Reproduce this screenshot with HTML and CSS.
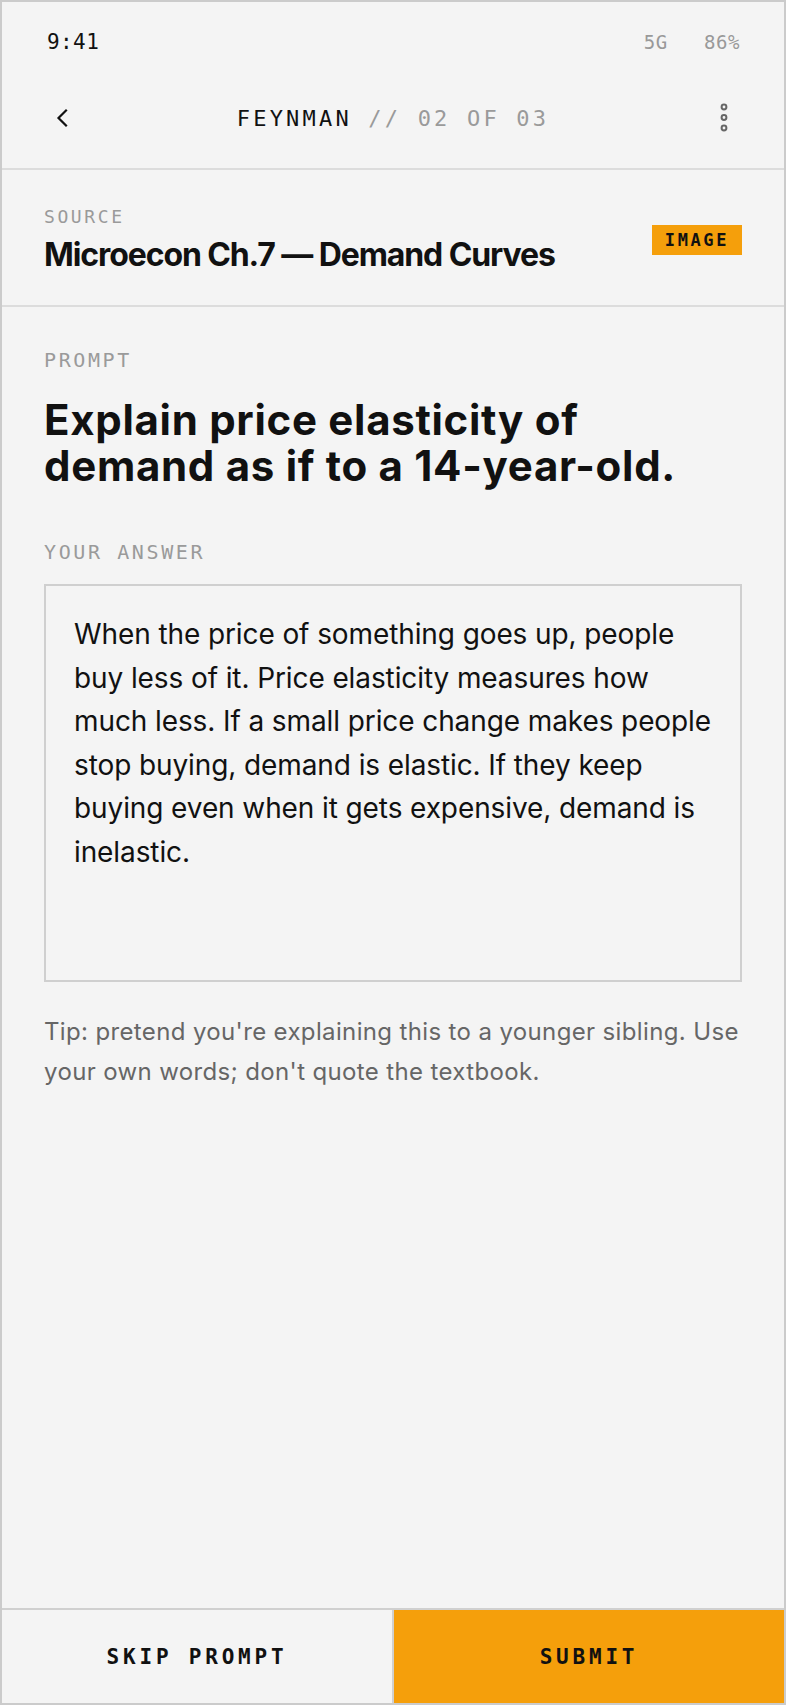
FILE: index.html
```html
<!DOCTYPE html>
<html lang="en">
<head>
    <meta charset="UTF-8">
    <meta name="viewport" content="width=device-width, initial-scale=1.0">
    <title>Feynman Prompt</title>
    <link rel="stylesheet" href="styles.css">
</head>
<body>
    <div class="phone">
        <div class="status-bar">
            <span class="time">9:41</span>
            <div class="status-right">
                <span>5G</span>
                <span>86%</span>
            </div>
        </div>

        <div class="nav">
            <button class="icon-btn" aria-label="Back">
                <svg width="14" height="20" viewBox="0 0 14 20">
                    <path d="M11 2.5 L3.5 10 L11 17.5" fill="none" stroke="#111" stroke-width="2.2" stroke-linecap="square"/>
                </svg>
            </button>
            <div class="nav-title">FEYNMAN <span class="muted">// 02 OF 03</span></div>
            <button class="icon-btn" aria-label="More">
                <svg width="10" height="32" viewBox="0 0 10 32">
                    <circle cx="5" cy="5" r="2.4" fill="none" stroke="#666" stroke-width="2"/>
                    <circle cx="5" cy="15.5" r="2.4" fill="none" stroke="#666" stroke-width="2"/>
                    <circle cx="5" cy="26" r="2.4" fill="none" stroke="#666" stroke-width="2"/>
                </svg>
            </button>
        </div>

        <div class="source">
            <div>
                <div class="label label-sm">SOURCE</div>
                <div class="source-title">Microecon Ch.7 — Demand Curves</div>
            </div>
            <span class="badge">IMAGE</span>
        </div>

        <div class="content">
            <div class="label">PROMPT</div>
            <h1 class="prompt">Explain price elasticity of demand as if to a 14-year-old.</h1>

            <div class="label answer-label">YOUR ANSWER</div>
            <div class="answer-box">
                When the price of something goes up, people buy less of it. Price elasticity measures how much less. If a small price change makes people stop buying, demand is elastic. If they keep buying even when it gets expensive, demand is inelastic.
            </div>

            <p class="tip">Tip: pretend you're explaining this to a younger sibling. Use your own words; don't quote the textbook.</p>
        </div>

        <div class="footer">
            <button class="footer-btn skip">SKIP PROMPT</button>
            <button class="footer-btn submit">SUBMIT</button>
        </div>
    </div>
</body>
</html>
```

FILE: styles.css
```css
* {
    box-sizing: border-box;
}

body {
    margin: 0;
    background-color: #f4f4f4;
    font-family: Inter, "Noto Sans", sans-serif;
    color: #111;
}

.phone {
    height: 1705px;
    border: 2px solid #cbcbcb;
    background-color: #f4f4f4;
    display: flex;
    flex-direction: column;
}

.status-bar {
    height: 80px;
    padding: 0 44px 0 45px;
    display: flex;
    justify-content: space-between;
    align-items: center;
    font-family: "DejaVu Sans Mono", "Liberation Mono", monospace;
    font-size: 21px;
    letter-spacing: 0.4px;
}

.status-right {
    display: flex;
    gap: 36px;
    color: #999;
    font-size: 19px;
    letter-spacing: 0.6px;
}

.nav {
    height: 88px;
    padding: 0 40px 14px 40px;
    display: flex;
    justify-content: space-between;
    align-items: center;
    border-bottom: 2px solid #dcdcdc;
}

.icon-btn {
    background: none;
    border: none;
    padding: 0;
    width: 40px;
    height: 40px;
    display: flex;
    align-items: center;
    justify-content: center;
    cursor: pointer;
}

.nav-title {
    font-family: "DejaVu Sans Mono", "Liberation Mono", monospace;
    font-size: 22px;
    letter-spacing: 3.2px;
    color: #111;
}

.nav-title .muted {
    color: #9a9a9a;
}

.source {
    padding: 36px 42px 31px 42px;
    display: flex;
    justify-content: space-between;
    align-items: center;
    border-bottom: 2px solid #dcdcdc;
}

.label {
    font-family: "DejaVu Sans Mono", "Liberation Mono", monospace;
    font-size: 20px;
    line-height: 24px;
    letter-spacing: 2.6px;
    color: #9a9a9a;
}

.label-sm {
    font-size: 18px;
    line-height: 22px;
    margin-bottom: 8px;
}

.source-title {
    font-size: 32px;
    line-height: 38px;
    font-weight: 700;
    letter-spacing: -1.1px;
}

.badge {
    background-color: #f59f0b;
    padding: 0 13px;
    height: 30px;
    line-height: 30px;
    font-family: "DejaVu Sans Mono", "Liberation Mono", monospace;
    font-weight: 700;
    font-size: 17px;
    letter-spacing: 2.6px;
    color: #111;
}

.content {
    flex: 1;
    padding: 41px 42px 0 42px;
}

.prompt {
    margin: 25px 0 0 0;
    max-width: 660px;
    font-size: 42px;
    line-height: 46px;
    font-weight: 700;
    letter-spacing: 0.7px;
}

.answer-label {
    margin-top: 51px;
}

.answer-box {
    margin-top: 20px;
    min-height: 398px;
    border: 2px solid #cfcfcf;
    padding: 27px 28px;
    font-size: 28px;
    line-height: 43.5px;
    letter-spacing: -0.1px;
    color: #111;
}

.tip {
    margin: 30px 0 0 0;
    font-size: 24px;
    line-height: 39.5px;
    letter-spacing: 0.36px;
    color: #666;
}

.footer {
    display: flex;
    border-top: 2px solid #d0d0d0;
    height: 95px;
}

.footer-btn {
    flex: 1;
    border: none;
    font-family: "DejaVu Sans Mono", "Liberation Mono", monospace;
    font-weight: 700;
    font-size: 21px;
    letter-spacing: 3.8px;
    color: #111;
    cursor: pointer;
}

.skip {
    background-color: #f4f4f4;
    border-right: 2px solid #d0d0d0;
}

.submit {
    background-color: #f59f0b;
}
```
